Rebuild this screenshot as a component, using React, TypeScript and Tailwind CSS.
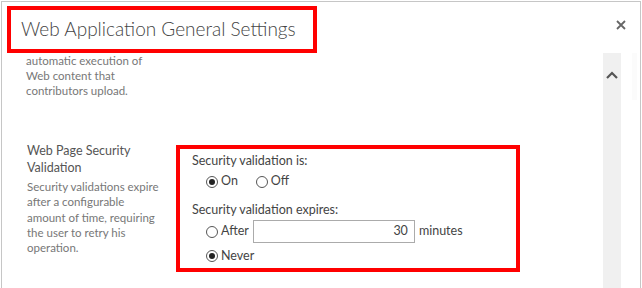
import React from "react";

function Radio({ checked }: { checked?: boolean }) {
  return (
    <span className="flex h-[12px] w-[12px] shrink-0 items-center justify-center rounded-full border border-[#555] bg-white">
      {checked && <span className="h-[6px] w-[6px] rounded-full bg-[#222]" />}
    </span>
  );
}

export default function App() {
  return (
    <div className="h-[288px] w-[642px] overflow-hidden bg-white pl-px pt-px font-['Lato','Liberation_Sans',sans-serif]">
      <div className="flex h-[300px] w-[640px] flex-col border-x border-t border-[#c6c6c6]">
        {/* Header */}
        <div className="relative h-[51px] shrink-0 pl-[5px] pt-[4px]">
          <div className="flex h-[47px] w-[310px] items-center border-4 border-[#ff0000] pl-[10px]">
            <h1 className="whitespace-nowrap text-[19px] font-light text-[#444]">Web Application General Settings</h1>
          </div>
          <button className="absolute right-[12px] top-[16px] p-0.5">
            <svg width="10" height="10" viewBox="0 0 10 10" className="text-[#666]">
              <path d="M1 1L9 9M9 1L1 9" stroke="currentColor" strokeWidth="1.8" />
            </svg>
          </button>
        </div>

        {/* Body */}
        <div className="flex flex-1 overflow-hidden">
          <div className="w-[601px] overflow-hidden">
            <p className="pl-[24px] text-[11.5px] leading-[15px] text-[#777]">
              automatic execution of<br />
              Web content that<br />
              contributors upload.
            </p>

            <div className="mt-[44px] flex">
              <div className="w-[174px] shrink-0 pl-[25px]">
                <h3 className="text-[12.5px] leading-[17px] text-[#555]">
                  Web Page Security<br />Validation
                </h3>
                <p className="mt-[3px] text-[11.5px] leading-[15.25px] text-[#777]">
                  Security validations expire<br />
                  after a configurable<br />
                  amount of time, requiring<br />
                  the user to retry his<br />
                  operation.
                </p>
              </div>

              <div className="mt-[3px] w-[344px] border-4 border-[#ff0000] px-[12px] pb-[2px] pt-[2px] text-[12.5px] text-[#444]">
                <div className="flex h-[20px] items-center">Security validation is:</div>
                <div className="flex h-[21px] items-center pl-[14px]">
                  <Radio checked />
                  <span className="ml-[3px]">On</span>
                  <span className="ml-[18px]"><Radio /></span>
                  <span className="ml-[3px]">Off</span>
                </div>
                <div className="mt-[8px] flex h-[20px] items-center">Security validation expires:</div>
                <div className="flex h-[23px] items-center pl-[14px]">
                  <Radio />
                  <span className="ml-[3px]">After</span>
                  <div className="ml-[4px] flex h-[23px] w-[162px] items-center justify-end border border-[#ababab] pr-[6px] text-[12.5px]">30</div>
                  <span className="ml-[4px]">minutes</span>
                </div>
                <div className="mt-[3px] flex h-[20px] items-center pl-[14px]">
                  <Radio checked />
                  <span className="ml-[3px]">Never</span>
                </div>
              </div>
            </div>
          </div>

          {/* Scrollbar */}
          <div className="flex w-[18px] shrink-0 flex-col items-center bg-[#f0f0f0] pt-[18px]">
            <svg width="12" height="8" viewBox="0 0 12 8" className="text-[#555]">
              <path d="M1 7L6 2L11 7" stroke="currentColor" strokeWidth="2.2" fill="none" />
            </svg>
          </div>
          <div className="ml-[11px] mt-[-21px] h-[68px] w-[5px] bg-[#fbfbfb]" />
        </div>
      </div>
    </div>
  );
}
